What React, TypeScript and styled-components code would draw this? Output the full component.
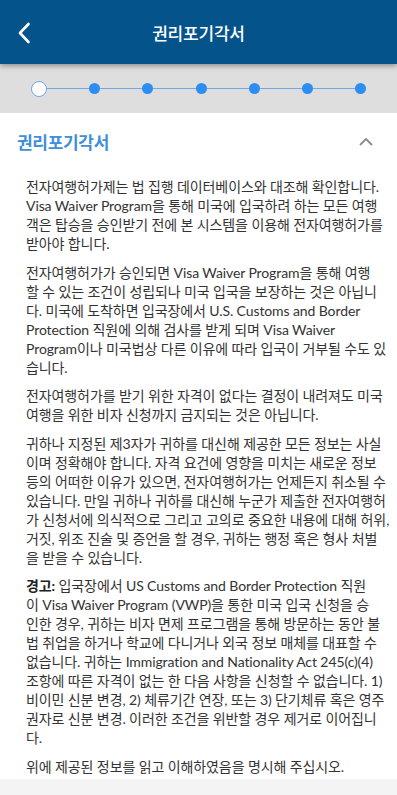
import React from "react";
import styled, { createGlobalStyle } from "styled-components";

const Global = createGlobalStyle`
  html, body { margin: 0; padding: 0; background: #f4f4f4; }
  body { font-family: "Lato", "Noto Sans CJK KR", sans-serif; -webkit-font-smoothing: antialiased; }
  * { box-sizing: border-box; }
`;

const Page = styled.div`
  width: 397px;
  min-height: 795px;
  display: flex;
  flex-direction: column;
  background: #f4f4f4;
  overflow: hidden;
`;

const Header = styled.header`
  position: relative;
  z-index: 2;
  height: 64px;
  background: #04538b;
  display: flex;
  align-items: center;
  justify-content: center;
  box-shadow: 0 2px 5px rgba(0, 0, 0, 0.35);
`;

const BackButton = styled.button`
  position: absolute;
  left: 12px;
  top: 18px;
  width: 24px;
  height: 30px;
  border: 0;
  background: none;
  padding: 0;
  display: flex;
  align-items: center;
  justify-content: center;
`;

const HeaderTitle = styled.h1`
  margin: 0;
  color: #fff;
  font-family: "Noto Sans CJK KR", sans-serif;
  font-size: 17px;
  font-weight: 500;
  letter-spacing: -0.2px;
`;

const StepperBand = styled.div`
  height: 49px;
  background: #dedede;
  display: flex;
  align-items: center;
  padding: 0 31px 0 31px;
`;

const StepDot = styled.span<{ $current?: boolean }>`
  flex: none;
  width: ${(p) => (p.$current ? "16px" : "11px")};
  height: ${(p) => (p.$current ? "16px" : "11px")};
  border-radius: 50%;
  background: ${(p) => (p.$current ? "#ffffff" : "#2b8ef0")};
  border: ${(p) => (p.$current ? "1.5px solid #6fa6e2" : "none")};
`;

const StepLine = styled.span`
  flex: 1;
  height: 1.5px;
  background: #74a8e2;
`;

const Section = styled.section`
  background: #fff;
  display: flex;
  flex-direction: column;
`;

const SectionHead = styled.div`
  height: 56px;
  display: flex;
  align-items: center;
  justify-content: space-between;
  padding: 0 24px 0 17px;
`;

const SectionTitle = styled.h2`
  margin: 0;
  color: #3f8fda;
  font-family: "Noto Sans CJK KR", sans-serif;
  font-size: 17px;
  font-weight: 700;
  letter-spacing: -0.3px;
`;

const Body = styled.div`
  padding: 8px 20px 3px 26px;
  display: flex;
  flex-direction: column;
  gap: 9.5px;
`;

const Para = styled.p`
  margin: 0;
  color: #333;
  font-size: 14px;
  line-height: 19px;
  white-space: nowrap;
  letter-spacing: -0.1px;
`;

const Strong = styled.b`
  font-weight: 700;
  color: #222;
`;

const lines = (arr: string[]) =>
  arr.map((l, i) => (
    <React.Fragment key={i}>
      {l}
      {i < arr.length - 1 && <br />}
    </React.Fragment>
  ));

export default function App() {
  return (
    <>
      <Global />
      <Page>
        <Header>
          <BackButton aria-label="back">
            <svg width="14" height="22" viewBox="0 0 14 22">
              <path d="M11.5 2 L3 11 L11.5 20" fill="none" stroke="#fff" strokeWidth="2.6" strokeLinecap="round" strokeLinejoin="round" />
            </svg>
          </BackButton>
          <HeaderTitle>권리포기각서</HeaderTitle>
        </Header>
        <StepperBand>
          <StepDot $current />
          <StepLine />
          <StepDot />
          <StepLine />
          <StepDot />
          <StepLine />
          <StepDot />
          <StepLine />
          <StepDot />
          <StepLine />
          <StepDot />
          <StepLine />
          <StepDot />
        </StepperBand>
        <Section>
          <SectionHead>
            <SectionTitle>권리포기각서</SectionTitle>
            <svg width="14" height="9" viewBox="0 0 14 9">
              <path d="M1.5 7.5 L7 2 L12.5 7.5" fill="none" stroke="#8c8c8c" strokeWidth="1.8" strokeLinecap="round" strokeLinejoin="round" />
            </svg>
          </SectionHead>
          <Body>
            <Para>
              {lines([
                "전자여행허가제는 법 집행 데이터베이스와 대조해 확인합니다.",
                "Visa Waiver Program을 통해 미국에 입국하려 하는 모든 여행",
                "객은 탑승을 승인받기 전에 본 시스템을 이용해 전자여행허가를",
                "받아야 합니다.",
              ])}
            </Para>
            <Para>
              {lines([
                "전자여행허가가 승인되면 Visa Waiver Program을 통해 여행",
                "할 수 있는 조건이 성립되나 미국 입국을 보장하는 것은 아닙니",
                "다. 미국에 도착하면 입국장에서 U.S. Customs and Border",
                "Protection 직원에 의해 검사를 받게 되며 Visa Waiver",
                "Program이나 미국법상 다른 이유에 따라 입국이 거부될 수도 있",
                "습니다.",
              ])}
            </Para>
            <Para>
              {lines([
                "전자여행허가를 받기 위한 자격이 없다는 결정이 내려져도 미국",
                "여행을 위한 비자 신청까지 금지되는 것은 아닙니다.",
              ])}
            </Para>
            <Para>
              {lines([
                "귀하나 지정된 제3자가 귀하를 대신해 제공한 모든 정보는 사실",
                "이며 정확해야 합니다. 자격 요건에 영향을 미치는 새로운 정보",
                "등의 어떠한 이유가 있으면, 전자여행허가는 언제든지 취소될 수",
                "있습니다. 만일 귀하나 귀하를 대신해 누군가 제출한 전자여행허",
                "가 신청서에 의식적으로 그리고 고의로 중요한 내용에 대해 허위,",
                "거짓, 위조 진술 및 증언을 할 경우, 귀하는 행정 혹은 형사 처벌",
                "을 받을 수 있습니다.",
              ])}
            </Para>
            <Para>
              <Strong>경고:</Strong>{" "}
              {lines([
                "입국장에서 US Customs and Border Protection 직원",
                "이 Visa Waiver Program (VWP)을 통한 미국 입국 신청을 승",
                "인한 경우, 귀하는 비자 면제 프로그램을 통해 방문하는 동안 불",
                "법 취업을 하거나 학교에 다니거나 외국 정보 매체를 대표할 수",
                "없습니다. 귀하는 Immigration and Nationality Act 245(c)(4)",
                "조항에 따른 자격이 없는 한 다음 사항을 신청할 수 없습니다. 1)",
                "비이민 신분 변경, 2) 체류기간 연장, 또는 3) 단기체류 혹은 영주",
                "권자로 신분 변경. 이러한 조건을 위반할 경우 제거로 이어집니",
                "다.",
              ])}
            </Para>
            <Para>
              {lines(["위에 제공된 정보를 읽고 이해하였음을 명시해 주십시오."])}
            </Para>
          </Body>
        </Section>
      </Page>
    </>
  );
}
